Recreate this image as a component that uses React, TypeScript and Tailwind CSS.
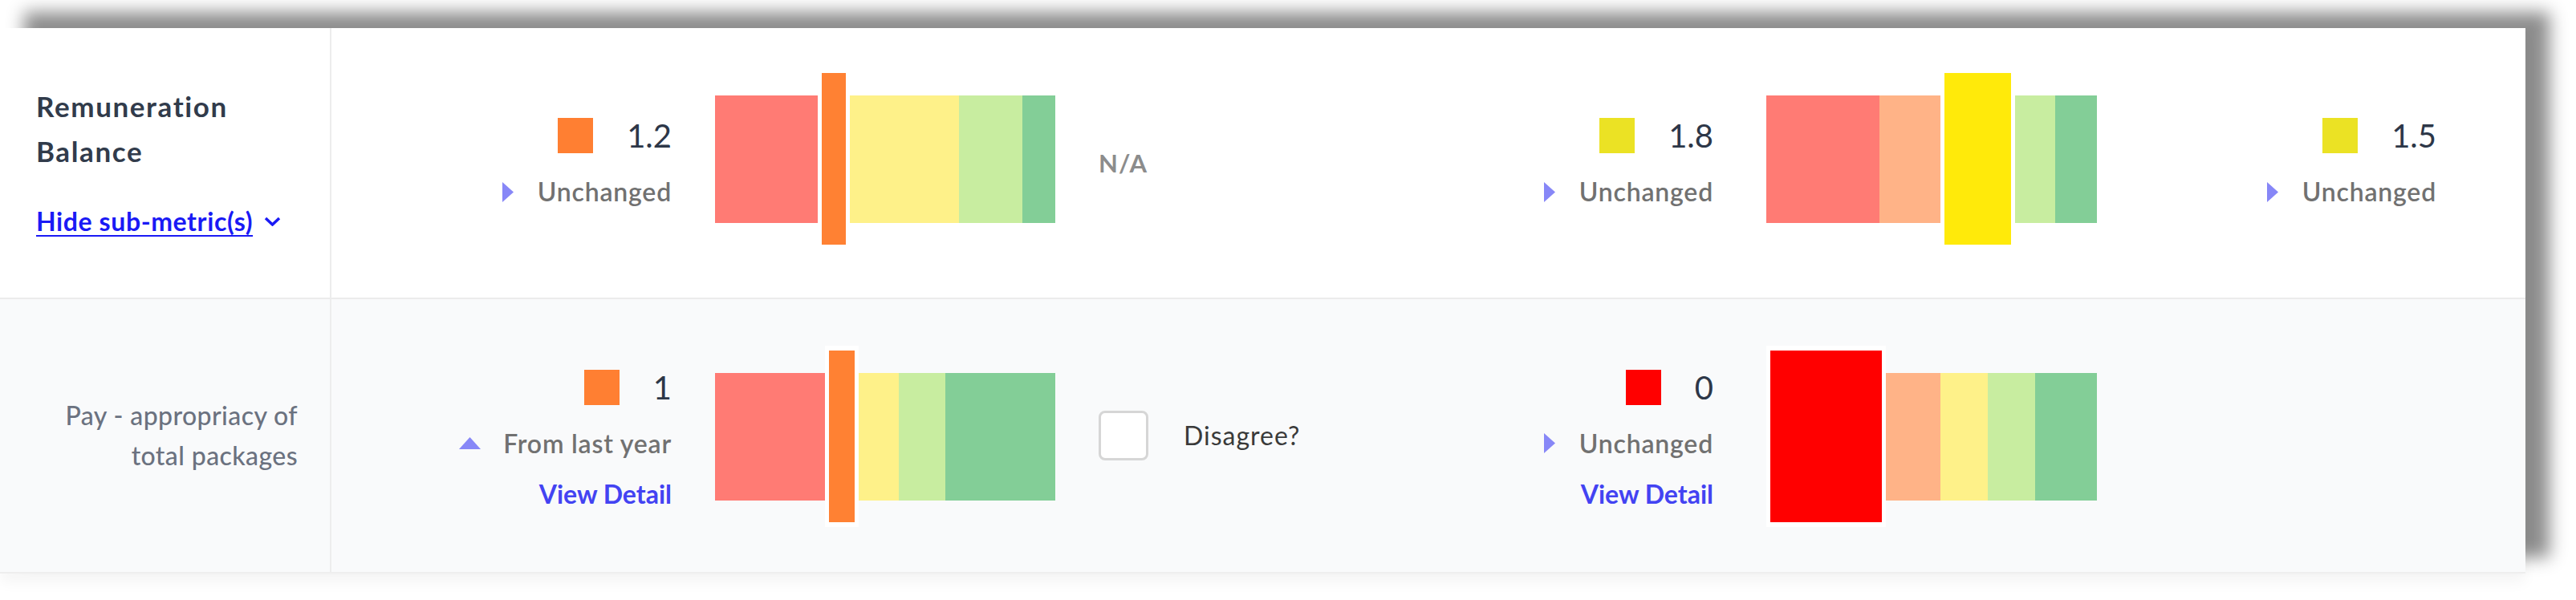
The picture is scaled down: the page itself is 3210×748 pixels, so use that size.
type Seg = { w: number; c: string; hi?: boolean };

const RED = "#ff7b74";
const ORANGE = "#ffb387";
const YELLOW = "#fef189";
const LIME = "#c8eda0";
const GREEN = "#83ce97";

const TriRight = () => (
  <svg width="14" height="25" viewBox="0 0 14 25">
    <polygon points="0,0 14,12.5 0,25" fill="#8787f7" />
  </svg>
);

const TriUp = () => (
  <svg width="27" height="15" viewBox="0 0 27 15">
    <polygon points="13.5,0 27,15 0,15" fill="#8787f7" />
  </svg>
);

const Bar = ({ segs, low }: { segs: Seg[]; low?: boolean }) => (
  <div className={`flex items-center h-[226px] ${low ? "mt-[2px]" : "mb-[10px]"}`}>
    {segs.map((s, i) =>
      s.hi ? (
        <div
          key={i}
          className="h-[226px] border-x-[5px] border-y-[6px] border-white"
          style={{ width: s.w, background: s.c }}
        />
      ) : (
        <div key={i} className="h-[159px]" style={{ width: s.w, background: s.c }} />
      )
    )}
  </div>
);

const Value = ({
  color,
  value,
  up,
  detail,
}: {
  color: string;
  value: string;
  up?: boolean;
  detail?: boolean;
}) => (
  <div className={`flex flex-col items-end ${detail ? "mt-[10px]" : ""}`}>
    <div className="flex items-center gap-[42px]">
      <span className="block w-[44px] h-[44px]" style={{ background: color }} />
      <span className="text-[40px] leading-[44px] text-[#2d3748]">{value}</span>
    </div>
    <div className={`flex items-center h-[40px] mt-[28px] ${up ? "gap-[28px]" : "gap-[30px]"}`}>
      {up ? <TriUp /> : <TriRight />}
      <span className="text-[32px] leading-[40px] font-semibold tracking-[0.8px] text-[#717171]">
        {up ? "From last year" : "Unchanged"}
      </span>
    </div>
    {detail && (
      <a href="#" className="mt-[23px] text-[32px] leading-[40px] font-bold text-[#4343f2]">
        View Detail
      </a>
    )}
  </div>
);

export default function App() {
  return (
    <div className="font-['Lato',sans-serif] bg-white pt-[35px] pb-[35px]">
      <div className="w-[3147px] bg-white shadow-[30px_-20px_20px_rgba(0,0,0,0.45),0_12px_16px_rgba(0,0,0,0.04)]">
        {/* parent metric */}
        <div className="flex h-[338px] border-b-2 border-[#ececec]">
          <div className="w-[413px] shrink-0 border-r-2 border-[#ededed] pl-[45px] pb-[6px] flex flex-col justify-center">
            <div className="text-[35px] leading-[56px] font-bold tracking-[1.6px] text-[#313b4b]">
              Remuneration
              <br />
              Balance
            </div>
            <a
              href="#"
              className="mt-[40px] flex items-center gap-[14px] text-[32px] leading-[40px] font-bold tracking-[0.6px] text-[#1a1af5]"
            >
              <span className="underline underline-offset-[5px] decoration-2">Hide sub-metric(s)</span>
              <svg width="21" height="12" viewBox="0 0 21 12">
                <polyline points="2,2 10.5,10 19,2" fill="none" stroke="#1a1af5" strokeWidth="3.5" />
              </svg>
            </a>
          </div>
          <div className="w-[930px] flex items-center justify-end gap-[54px] pr-[28px]">
            <Value color="#ff7f32" value="1.2" />
            <Bar
              segs={[
                { w: 128, c: RED },
                { w: 40, c: "#ff8133", hi: true },
                { w: 136, c: YELLOW },
                { w: 79, c: LIME },
                { w: 41, c: GREEN },
              ]}
            />
          </div>
          <div className="w-[400px] flex items-center pl-[26px]">
            <span className="text-[31px] font-bold tracking-[1px] text-[#8c8c8c]">N/A</span>
          </div>
          <div className="w-[898px] flex items-center justify-end gap-[66px] pr-[28px]">
            <Value color="#ebe224" value="1.8" />
            <Bar
              segs={[
                { w: 141, c: RED },
                { w: 76, c: ORANGE },
                { w: 93, c: "#ffea0a", hi: true },
                { w: 50, c: LIME },
                { w: 52, c: GREEN },
              ]}
            />
          </div>
          <div className="flex-1 flex items-center justify-end pr-[111px]">
            <Value color="#ebe224" value="1.5" />
          </div>
        </div>

        {/* sub metric */}
        <div className="flex h-[342px] bg-[#f9fafb] border-b-2 border-[#eeeeee]">
          <div className="w-[413px] shrink-0 border-r-2 border-[#ededed] pr-[40px] flex flex-col justify-center text-right">
            <div className="text-[32px] leading-[50px] font-medium tracking-[0.4px] text-[#6b7280]">
              Pay - appropriacy of
              <br />
              total packages
            </div>
          </div>
          <div className="w-[930px] flex items-center justify-end gap-[54px] pr-[28px]">
            <Value color="#ff7f32" value="1" up detail />
            <Bar
              low
              segs={[
                { w: 137, c: RED },
                { w: 42, c: "#ff8133", hi: true },
                { w: 50, c: YELLOW },
                { w: 58, c: LIME },
                { w: 137, c: GREEN },
              ]}
            />
          </div>
          <div className="w-[400px] flex items-center gap-[44px] pl-[26px]">
            <span className="block w-[62px] h-[62px] rounded-[8px] border-[3px] border-[#d6d6d6] bg-white" />
            <span className="text-[32px] tracking-[1px] text-[#3a3a3a]">Disagree?</span>
          </div>
          <div className="w-[898px] flex items-center justify-end gap-[66px] pr-[28px]">
            <Value color="#ff0000" value="0" detail />
            <Bar
              low
              segs={[
                { w: 149, c: "#ff0000", hi: true },
                { w: 68, c: ORANGE },
                { w: 59, c: YELLOW },
                { w: 59, c: LIME },
                { w: 77, c: GREEN },
              ]}
            />
          </div>
          <div className="flex-1" />
        </div>
      </div>
    </div>
  );
}
